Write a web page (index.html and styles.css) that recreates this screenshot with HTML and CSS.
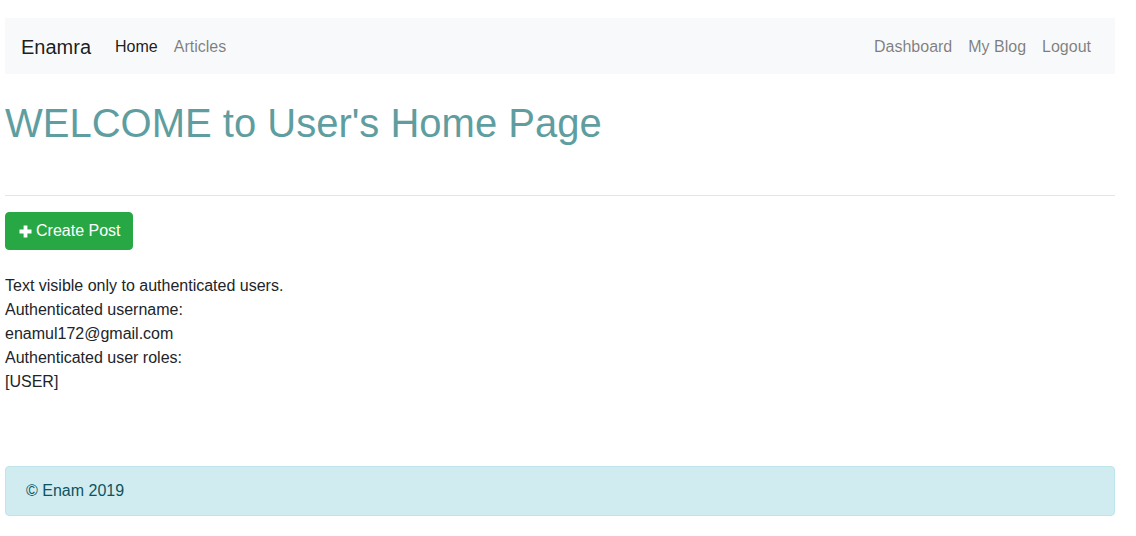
FILE: index.html
```html
<!DOCTYPE html>
<html lang="en">
<head>
<meta charset="utf-8">
<title>Home</title>
<link rel="stylesheet" href="styles.css">
</head>
<body>
<div class="container">
  <nav class="navbar">
    <a class="brand" href="#">Enamra</a>
    <ul class="nav">
      <li><a class="nav-link active" href="#">Home</a></li>
      <li><a class="nav-link" href="#">Articles</a></li>
    </ul>
    <ul class="nav nav-right">
      <li><a class="nav-link" href="#">Dashboard</a></li>
      <li><a class="nav-link" href="#">My Blog</a></li>
      <li><a class="nav-link" href="#">Logout</a></li>
    </ul>
  </nav>

  <h1 class="title">WELCOME to User's Home Page</h1>
  <hr class="rule">

  <a class="btn-success" href="#"><svg class="icon-plus" width="13" height="13" viewBox="0 0 13 13" aria-hidden="true"><path d="M4.6 0.5h3.8v4.1h4.1v3.8H8.4v4.1H4.6V8.4H0.5V4.6h4.1z" fill="#fff"/></svg>Create Post</a>

  <div class="auth">
    <div>Text visible only to authenticated users.</div>
    <div>Authenticated username:</div>
    <div>enamul172@gmail.com</div>
    <div>Authenticated user roles:</div>
    <div>[USER]</div>
  </div>

  <footer class="alert-info">© Enam 2019</footer>
</div>
</body>
</html>
```

FILE: styles.css
```css
* { box-sizing: border-box; }
html, body { margin: 0; padding: 0; background: #fff; }
body {
  font-family: "Liberation Sans", Arial, sans-serif;
  font-size: 16px;
  line-height: 1.5;
  color: #212529;
}
.container {
  width: 1110px;
  margin-left: 5px;
  padding-top: 18px;
}
.navbar {
  display: flex;
  align-items: center;
  height: 56px;
  padding: 9px 16px 7px;
  background: #f8f9fa;
}
.brand {
  font-size: 20px;
  line-height: 30px;
  color: rgba(0,0,0,.9);
  text-decoration: none;
  margin-right: 16px;
  padding: 5px 0;
}
.nav {
  display: flex;
  list-style: none;
  margin: 0;
  padding: 0;
}
.nav-right { margin-left: auto; }
.nav-link {
  display: block;
  padding: 8px 8px;
  color: rgba(0,0,0,.5);
  text-decoration: none;
}
.nav-link.active { color: rgba(0,0,0,.9); }

.title {
  margin: 25px 0 48px;
  font-size: 40px;
  font-weight: 400;
  line-height: 1.2;
  color: #5f9ea0;
}
.rule {
  margin: 16px 0;
  border: 0;
  border-top: 1px solid rgba(0,0,0,.1);
  height: 0;
}
.btn-success {
  display: inline-flex;
  align-items: center;
  height: 38px;
  padding: 6px 12px 6px 13px;
  font-size: 16px;
  line-height: 24px;
  color: #fff;
  background: #28a745;
  border: 1px solid #28a745;
  border-radius: 4px;
  text-decoration: none;
}
.icon-plus { margin-right: 4px; }
.auth {
  margin-top: 24px;
}
.alert-info {
  margin-top: 72px;
  height: 50px;
  padding: 12px 20px;
  color: #0c5460;
  background: #d1ecf1;
  border: 1px solid #bee5eb;
  border-radius: 4px;
}
```
